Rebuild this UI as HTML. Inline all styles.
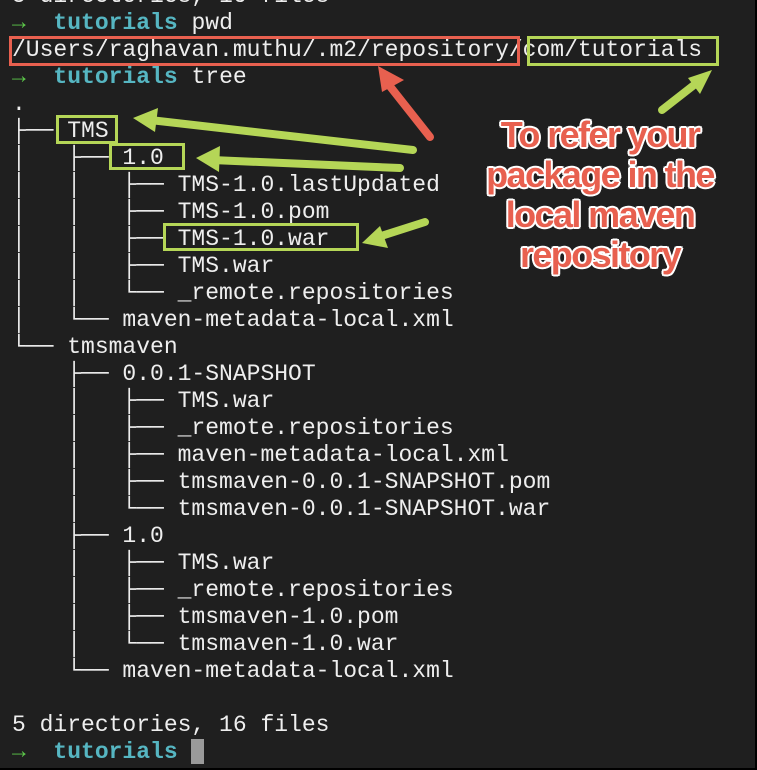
<!DOCTYPE html>
<html><head><meta charset="utf-8"><style>
html,body{margin:0;padding:0;}
body{width:757px;height:770px;overflow:hidden;background:#000;position:relative;}
#t{position:absolute;left:0;top:0;width:755px;height:768px;background:#1f1f1f;overflow:hidden;}
.r{position:absolute;left:12px;height:27px;line-height:27px;font-family:"Liberation Mono","DejaVu Sans Mono",monospace;font-size:23px;color:#eeeeee;white-space:pre;}
.g{color:#5cc84a;font-weight:bold}
.c{color:#56b6c2;font-weight:bold}
.box{position:absolute;border:3.5px solid #b5d657;box-sizing:border-box;}
.red{border-color:#e8604f;}
#note{position:absolute;left:430px;top:115px;width:340px;text-align:center;font-family:"Liberation Sans",sans-serif;font-weight:bold;font-size:36px;line-height:40px;color:#e8604f;letter-spacing:-1.6px;
text-shadow:2px 0 #fff,-2px 0 #fff,0 2px #fff,0 -2px #fff,1.5px 1.5px #fff,-1.5px -1.5px #fff,1.5px -1.5px #fff,-1.5px 1.5px #fff;}
</style></head><body><div id="t">
<div class="r" style="top:-17px">5 directories, 16 files</div>
<div class="r" style="top:10px"><span class="g">→</span>  <span class="c">tutorials</span> pwd</div>
<div class="r" style="top:37px">/Users/raghavan.muthu/.m2/repository/com/tutorials</div>
<div class="r" style="top:64px"><span class="g">→</span>  <span class="c">tutorials</span> tree</div>
<div class="r" style="top:91px">.</div>
<div class="r" style="top:118px">├── TMS</div>
<div class="r" style="top:145px">│   ├── 1.0</div>
<div class="r" style="top:172px">│   │   ├── TMS-1.0.lastUpdated</div>
<div class="r" style="top:199px">│   │   ├── TMS-1.0.pom</div>
<div class="r" style="top:226px">│   │   ├── TMS-1.0.war</div>
<div class="r" style="top:253px">│   │   ├── TMS.war</div>
<div class="r" style="top:280px">│   │   └── _remote.repositories</div>
<div class="r" style="top:307px">│   └── maven-metadata-local.xml</div>
<div class="r" style="top:334px">└── tmsmaven</div>
<div class="r" style="top:361px">    ├── 0.0.1-SNAPSHOT</div>
<div class="r" style="top:388px">    │   ├── TMS.war</div>
<div class="r" style="top:415px">    │   ├── _remote.repositories</div>
<div class="r" style="top:442px">    │   ├── maven-metadata-local.xml</div>
<div class="r" style="top:469px">    │   ├── tmsmaven-0.0.1-SNAPSHOT.pom</div>
<div class="r" style="top:496px">    │   └── tmsmaven-0.0.1-SNAPSHOT.war</div>
<div class="r" style="top:523px">    ├── 1.0</div>
<div class="r" style="top:550px">    │   ├── TMS.war</div>
<div class="r" style="top:577px">    │   ├── _remote.repositories</div>
<div class="r" style="top:604px">    │   ├── tmsmaven-1.0.pom</div>
<div class="r" style="top:631px">    │   └── tmsmaven-1.0.war</div>
<div class="r" style="top:658px">    └── maven-metadata-local.xml</div>
<div class="r" style="top:712px">5 directories, 16 files</div>
<div class="r" style="top:739px"><span class="g">→</span>  <span class="c">tutorials</span> </div>
<div style="position:absolute;left:191px;top:739px;width:13px;height:25px;background:#9a9a9a"></div>

<div class="box red" style="left:9px;top:36px;width:511px;height:30px"></div>
<div class="box" style="left:527px;top:36px;width:192px;height:30px"></div>
<div class="box" style="left:56px;top:115px;width:62px;height:29px"></div>
<div class="box" style="left:109px;top:143px;width:76px;height:27px"></div>
<div class="box" style="left:163px;top:223px;width:196px;height:28px"></div>

<svg width="757" height="770" style="position:absolute;left:0;top:0">
<g stroke-linecap="round" fill="none" stroke-width="8">
<line x1="430" y1="137" x2="385" y2="80" stroke="#e8604f"/>
<line x1="662" y1="110" x2="703" y2="78" stroke="#b5d657"/>
<line x1="413" y1="150" x2="150" y2="120" stroke="#b5d657"/>
<line x1="400" y1="168" x2="212" y2="160" stroke="#b5d657"/>
<line x1="425" y1="222" x2="375" y2="238" stroke="#b5d657"/>
</g>
<polygon points="378,66 404,80 382,92" fill="#e8604f"/>
<polygon points="712,70 700,94 688,78" fill="#b5d657"/>
<polygon points="133,118 158,108 155,132" fill="#b5d657"/>
<polygon points="196,158 220,146 219,172" fill="#b5d657"/>
<polygon points="362,243 380,226 388,248" fill="#b5d657"/>
</svg>
<div id="note">To refer your<br>package in the<br>local maven<br>repository</div>
</div></body></html>
